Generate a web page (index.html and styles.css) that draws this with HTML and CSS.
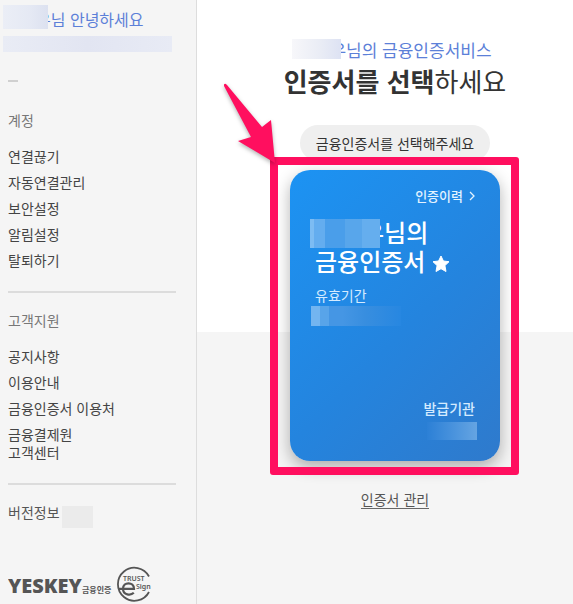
FILE: index.html
```html
<!DOCTYPE html>
<html lang="ko">
<head>
  <meta charset="UTF-8" />
  <meta name="viewport" content="width=device-width, initial-scale=1" />
  <title>금융인증서비스</title>
  <link rel="stylesheet" href="styles.css">
</head>
<body>
  <aside class="sidebar">
    <p class="greeting"><span class="mask mask-greeting"></span>우님 안녕하세요</p>
    <div class="mask-account"></div>
    <div class="dash"></div>

    <nav class="menu">
      <h2>계정</h2>
      <ul>
        <li><a href="#">연결끊기</a></li>
        <li><a href="#">자동연결관리</a></li>
        <li><a href="#">보안설정</a></li>
        <li><a href="#">알림설정</a></li>
        <li><a href="#">탈퇴하기</a></li>
      </ul>
    </nav>

    <nav class="menu divided">
      <h2>고객지원</h2>
      <ul>
        <li><a href="#">공지사항</a></li>
        <li><a href="#">이용안내</a></li>
        <li><a href="#">금융인증서 이용처</a></li>
        <li><a href="#">금융결제원<br>고객센터</a></li>
      </ul>
    </nav>

    <div class="version divided">버전정보 <span class="mask-version"></span></div>

    <div class="logos">
      <svg width="106" height="36" viewBox="0 0 106 36" role="img" aria-label="YESKEY 금융인증">
        <text class="logo-name" x="0" y="27">YESKEY</text>
        <text class="logo-sub" x="74" y="27">금융인증</text>
      </svg>
      <svg width="36" height="36" viewBox="0 0 36 36" role="img" aria-label="TRUST eSign">
        <path d="M33 10.500A16.500 16.500 0 1 0 33 26" fill="none" stroke="#555" stroke-width="1.800"/>
        <text class="trust" x="7" y="15">TRUST</text>
        <path d="M2 22.800H18C18 15.500 7 15.500 7 22.800C7 29.500 15 29.500 17.800 26.800" fill="none" stroke="#555" stroke-width="2.200"/>
        <text class="sign" x="20" y="23">Sign</text>
      </svg>
    </div>
  </aside>

  <main class="content">
    <p class="service"><span class="mask mask-service"></span>우님의 금융인증서비스</p>
    <h1><strong>인증서를 선택</strong>하세요</h1>
    <div class="tip">금융인증서를 선택해주세요</div>

    <section class="cert">
      <a class="history" href="#">인증이력
        <svg width="6" height="10" viewBox="0 0 6 10"><path d="M1 1l4 4-4 4" fill="none" stroke="#e4f3ff" stroke-width="1.300"/></svg>
      </a>
      <h2><span class="mask mask-name"></span><span class="owner">우님의</span><br>금융인증서
        <svg class="star" width="18" height="18" viewBox="0 0 18 18"><path d="M9 1l2.400 5 5.600.700-4.100 3.900 1.100 5.900L9 13.700l-5 2.800 1.100-5.900L1 6.700l5.600-.700z" fill="#fff" stroke="#fff" stroke-linejoin="round"/></svg>
      </h2>
      <p class="label">유효기간</p>
      <div class="mask-period"></div>
      <div class="issuer">
        <p class="label">발급기관</p>
        <div class="mask-issuer"></div>
      </div>
      <div class="highlight"></div>
      <svg class="arrow" width="64" height="84" viewBox="0 0 64 84"><path d="M6 4.500Q7 3 9 5L44 47 53 40 57 83 20 61 33 57 6 6z" fill="#ff0f5f"/></svg>
    </section>

    <a class="manage" href="#">인증서 관리</a>
  </main>
</body>
</html>
```
FILE: styles.css
```css
* {
  box-sizing: border-box;
}

body {
  display: flex;
  min-height: 100vh;
  margin: 0;
  font-family: "Noto Sans CJK KR", sans-serif;
  font-size: 14px;
  line-height: 18px;
  color: #444;
  background: #f5f5f5;
}

h1, h2, p, ul {
  margin: 0;
  padding: 0;
  font-weight: 400;
}

ul {
  list-style: none;
}

a {
  color: inherit;
  text-decoration: none;
}

/* sidebar */
.sidebar {
  flex: 0 0 197px;
  padding: 7px 20px 0 8px;
  border-right: 1px solid #ddd;
}

.greeting {
  position: relative;
  padding-left: 28px;
  font-size: 16px;
  line-height: 24px;
  color: #5c80d8;
}

.mask {
  position: absolute;
}

.mask-greeting {
  left: -5px;
  top: -2px;
  width: 45px;
  height: 24px;
  background: linear-gradient(90deg, #ebeef6, #e5e9f4 60%, #dce1f0);
}

.mask-account {
  height: 16px;
  margin: 5px 4px 0 -5px;
  background: linear-gradient(90deg, #e9ecf5, #e2e5f2 50%, #e8ebf5);
}

.dash {
  width: 10px;
  height: 2px;
  margin: 28px 0 29px;
  background: #d0d0d0;
}

.menu h2 {
  margin-bottom: 18px;
  font-size: 14px;
  color: #777;
}

.menu ul {
  display: flex;
  flex-direction: column;
  gap: 8px;
}

.divided {
  margin-top: 22px;
  padding-top: 18px;
  border-top: 2px solid #dcdcdc;
}

.version {
  display: flex;
  gap: 2px;
  color: #555;
}

.mask-version {
  width: 31px;
  height: 22px;
  margin: 3px 0 -7px;
  background: #ebebeb;
}

.logos {
  display: flex;
  gap: 2px;
  margin-top: 45px;
}

.logos text {
  fill: #555;
}

.logo-name {
  font: 800 20px "Open Sans", sans-serif;
}

.logo-sub {
  font: 700 8px "Noto Sans CJK KR", sans-serif;
}

.trust,
.sign {
  font: 600 7px "Noto Sans", sans-serif;
}

/* main */
.content {
  flex: 1;
  display: flex;
  flex-direction: column;
  align-items: center;
  padding: 38px 0 40px 20px;
  background: linear-gradient(#fff 332px, #f5f5f5 332px);
}

.service {
  position: relative;
  margin-right: 6px;
  padding-left: 38px;
  font-size: 17px;
  line-height: 24px;
  color: #5c80d8;
}

.mask-service {
  left: 0;
  top: 1px;
  width: 49px;
  height: 20px;
  background: linear-gradient(90deg, #f7f7fa, #e9ecf5 60%, #dde2f3);
}

.content h1 {
  margin-top: 1px;
  font-size: 26px;
  line-height: 36px;
  color: #333;
}

.content h1 strong {
  font-weight: 700;
}

.tip {
  margin-top: 26px;
  padding: 9px 16px;
  border-radius: 18px;
  background: #efefef;
  color: #333;
}

.cert {
  position: relative;
  display: flex;
  flex-direction: column;
  width: 210px;
  min-height: 291px;
  margin-top: 9px;
  padding: 17px 25px 21px;
  border-radius: 20px;
  background: linear-gradient(135deg, #1c93f3, #2484de 55%, #2f7acc);
  box-shadow: 0 6px 16px rgba(0, 0, 0, 0.3);
  color: #d5ebff;
}

.history {
  display: flex;
  align-items: center;
  justify-content: flex-end;
  gap: 6px;
  font-size: 13px;
  font-weight: 500;
  color: #e4f3ff;
}

.cert h2 {
  position: relative;
  margin-top: 12px;
  font-size: 24px;
  font-weight: 500;
  line-height: 29px;
  color: #fff;
  white-space: nowrap;
}

.owner {
  padding-left: 47px;
}

.mask-name {
  left: -5px;
  top: 2px;
  width: 70px;
  height: 29px;
  background: linear-gradient(90deg, #7dbcf3 0 5%, #64adef 5% 22%, #4a9eea 22% 50%, #58a6eb 50% 75%, #65aeee 75%);
}

.star {
  vertical-align: -2px;
}

.label {
  font-weight: 500;
}

.cert h2 + .label {
  margin-top: 11px;
  font-weight: 400;
}

.mask-period {
  width: 90px;
  height: 20px;
  margin: 2px 0 0 -4px;
  background: linear-gradient(90deg, #73b5f0 0 10%, #58a4e9 10% 20%, #4596e4 20% 35%, #388edf 60%, #2787e1);
}

.issuer {
  display: flex;
  flex-direction: column;
  align-items: flex-end;
  margin-top: auto;
}

.mask-issuer {
  width: 50px;
  height: 18px;
  margin: 5px -2px 0 0;
  background: linear-gradient(90deg, #2c80d6, #4590dc 45%, #65a4e2);
}

/* red marker around the card */
.highlight {
  position: absolute;
  inset: -13px -19px -14px -20px;
  border: 8px solid #ff0f5f;
  border-radius: 3px;
  pointer-events: none;
}

.arrow {
  position: absolute;
  left: -72px;
  top: -90px;
  filter: drop-shadow(0 2px 2px rgba(0, 0, 0, 0.3));
  pointer-events: none;
}

.manage {
  margin-top: 29px;
  border-bottom: 1px solid #666;
  color: #555;
}
```
